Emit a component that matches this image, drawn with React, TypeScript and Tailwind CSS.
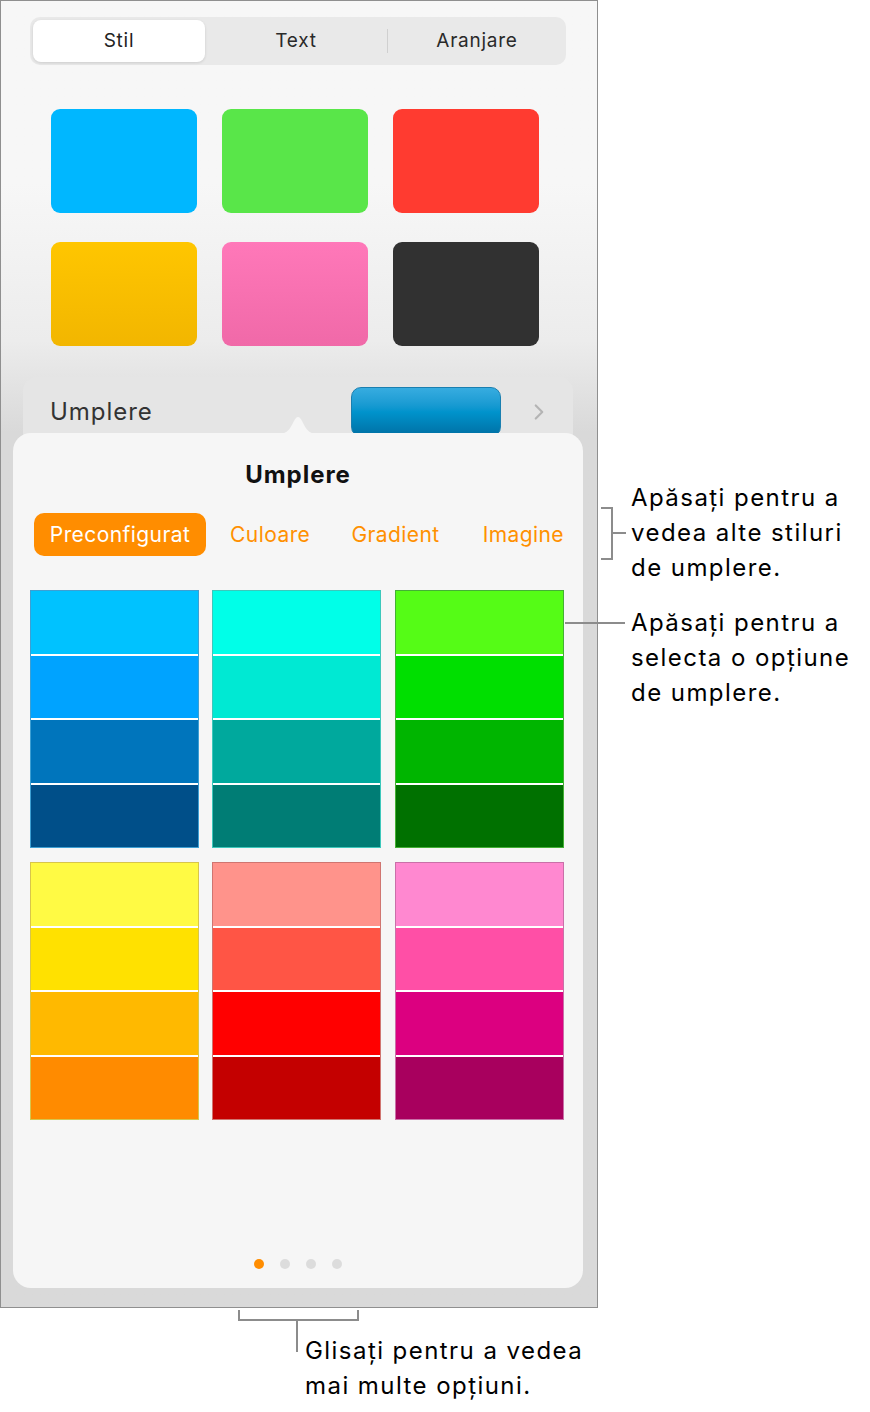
import { ChevronRight } from 'lucide-react';

const styleSwatches = [
  'bg-[#00b7ff]',
  'bg-[#59e649]',
  'bg-[#ff3b30]',
  'bg-linear-to-b from-[#ffc600] to-[#f2b600]',
  'bg-linear-to-b from-[#ff78b9] to-[#f069a8]',
  'bg-[#313131]',
];

const presetGroups = [
  [
    { border: 'border-[#3d9fd3]', rows: ['bg-[#00c2ff]', 'bg-[#00a3ff]', 'bg-[#0075bc]', 'bg-[#004f89]'] },
    { border: 'border-[#3cc8bb]', rows: ['bg-[#00ffe8]', 'bg-[#00e9d3]', 'bg-[#00a99d]', 'bg-[#007d75]'] },
    { border: 'border-[#44b035]', rows: ['bg-[#55fc16]', 'bg-[#00df00]', 'bg-[#00b500]', 'bg-[#007100]'] },
  ],
  [
    { border: 'border-[#d8c54a]', rows: ['bg-[#fffa44]', 'bg-[#ffe100]', 'bg-[#ffb900]', 'bg-[#ff8b00]'] },
    { border: 'border-[#d07570]', rows: ['bg-[#ff938b]', 'bg-[#ff5545]', 'bg-[#ff0000]', 'bg-[#c40000]'] },
    { border: 'border-[#c970a8]', rows: ['bg-[#ff88d0]', 'bg-[#ff4fa6]', 'bg-[#dc0080]', 'bg-[#a8005e]'] },
  ],
];

const tabs = ['Culoare', 'Gradient'];

export default function App() {
  return (
    <div className="relative w-[870px] h-[1412px] bg-white font-['Inter','Noto_Sans',sans-serif] text-black">
      {/* Screenshot frame */}
      <div className="relative w-[598px] h-[1308px] border border-[#8f8f8f] bg-linear-to-b from-[#f7f7f7] from-[14%] via-[#ececec] via-[26%] to-[#d9d9d9] to-[33%] overflow-hidden">
        {/* Segmented control */}
        <div className="mt-[16px] ml-[29px] w-[536px] h-[48px] rounded-[10px] bg-[#e9e9e9] p-[3px] flex items-center text-[19px] tracking-[0.04em]">
          <div className="w-[172px] h-full rounded-[8px] bg-white shadow-[0_1px_3px_rgba(0,0,0,0.12)] flex items-center justify-center text-[#222]">
            Stil
          </div>
          <div className="w-[182px] h-full flex items-center justify-center text-[#2a2a2a]">Text</div>
          <div className="w-px h-[24px] bg-[#d0d0d0]" />
          <div className="flex-1 h-full flex items-center justify-center pl-[3px] text-[#2a2a2a]">Aranjare</div>
        </div>

        {/* Style swatches */}
        <div className="mt-[44px] ml-[50px] grid grid-cols-[146px_146px_146px] gap-x-[25px] gap-y-[29px]">
          {styleSwatches.map((c, i) => (
            <div key={i} className={`h-[104px] rounded-[9px] ${c}`} />
          ))}
        </div>

        {/* Fill row */}
        <div className="mt-[31px] ml-[22px] w-[550px] h-[70px] rounded-[14px] bg-[#e5e5e5] flex items-start">
          <div className="ml-[27px] mt-[20px] text-[24px] tracking-[0.04em] text-[#333] leading-[30px]">Umplere</div>
          <div className="ml-auto mt-[10px] w-[150px] h-[50px] rounded-[10px] bg-linear-to-b from-[#36ace0] via-[#0093cc] to-[#0070a4] border border-[#1a7fb0]" />
          <ChevronRight className="mt-[22px] ml-[25px] mr-[21px] text-[#b4b4b4]" size={26} strokeWidth={2} />
        </div>

        {/* Popover */}
        <div className="absolute left-[12px] top-[432px] w-[570px] h-[855px] rounded-[18px] bg-[#f6f6f6] flex flex-col">
          <svg className="absolute left-[266px] -top-[20px]" width="38" height="21" viewBox="0 0 38 21">
            <path d="M0 21 C8 21 11 16 15 8 Q19 0 23 8 C27 16 30 21 38 21 Z" fill="#f6f6f6" />
          </svg>
          <div className="mt-[27px] text-center text-[24px] font-bold tracking-[0.04em] leading-[30px] text-[#111]">Umplere</div>

          <div className="mt-[23px] ml-[21px] flex items-center h-[43px] text-[21px] tracking-[0.02em]">
            <div className="w-[173px] h-full rounded-[10px] bg-[#ff8d00] text-white flex items-center justify-center">
              Preconfigurat
            </div>
            {tabs.map(t => (
              <div key={t} className="w-[126px] text-center pl-[3px] text-[#ff9000]">
                {t}
              </div>
            ))}
            <div className="ml-[3px] w-[124px] text-center pl-[4px] text-[#ff9000]">Imagine</div>
          </div>

          <div className="mt-[34px] ml-[17px] flex flex-col gap-[14px]">
            {presetGroups.map((group, gi) => (
              <div key={gi} className="flex">
                {group.map((col, ci) => (
                  <div
                    key={ci}
                    className={`w-[169px] h-[258px] border ${col.border} flex flex-col gap-[2px] bg-white ${ci === 1 ? 'ml-[13px]' : ci === 2 ? 'ml-[14px]' : ''}`}
                  >
                    {col.rows.map((r, ri) => (
                      <div key={ri} className={`flex-1 ${r}`} />
                    ))}
                  </div>
                ))}
              </div>
            ))}
          </div>

          <div className="mt-auto mb-[19px] flex justify-center gap-[16px]">
            <div className="w-[10px] h-[10px] rounded-full bg-[#ff8d00]" />
            <div className="w-[10px] h-[10px] rounded-full bg-[#dcdcdc]" />
            <div className="w-[10px] h-[10px] rounded-full bg-[#dcdcdc]" />
            <div className="w-[10px] h-[10px] rounded-full bg-[#dcdcdc]" />
          </div>
        </div>
      </div>

      {/* Callout 1 */}
      <div className="absolute left-[601px] top-[507px] w-[12px] h-[53px] border-y-2 border-r-2 border-[#8c8c8c]" />
      <div className="absolute left-[612px] top-[532px] w-[14px] h-[2px] bg-[#8c8c8c]" />
      <div className="absolute left-[631px] top-[480px] text-[24px] leading-[35px] tracking-[0.06em]">
        Apăsați pentru a<br />vedea alte stiluri<br />de umplere.
      </div>

      {/* Callout 2 */}
      <div className="absolute left-[565px] top-[622px] w-[60px] h-[2px] bg-[#8c8c8c]" />
      <div className="absolute left-[631px] top-[605px] text-[24px] leading-[35px] tracking-[0.06em]">
        Apăsați pentru a<br />selecta o opțiune<br />de umplere.
      </div>

      {/* Callout 3 */}
      <div className="absolute left-[238px] top-[1310px] w-[121px] h-[11px] border-x-2 border-b-2 border-[#8c8c8c]" />
      <div className="absolute left-[296px] top-[1320px] w-[2px] h-[32px] bg-[#8c8c8c]" />
      <div className="absolute left-[305px] top-[1333px] text-[24px] leading-[35px] tracking-[0.06em]">
        Glisați pentru a vedea<br />mai multe opțiuni.
      </div>
    </div>
  );
}
